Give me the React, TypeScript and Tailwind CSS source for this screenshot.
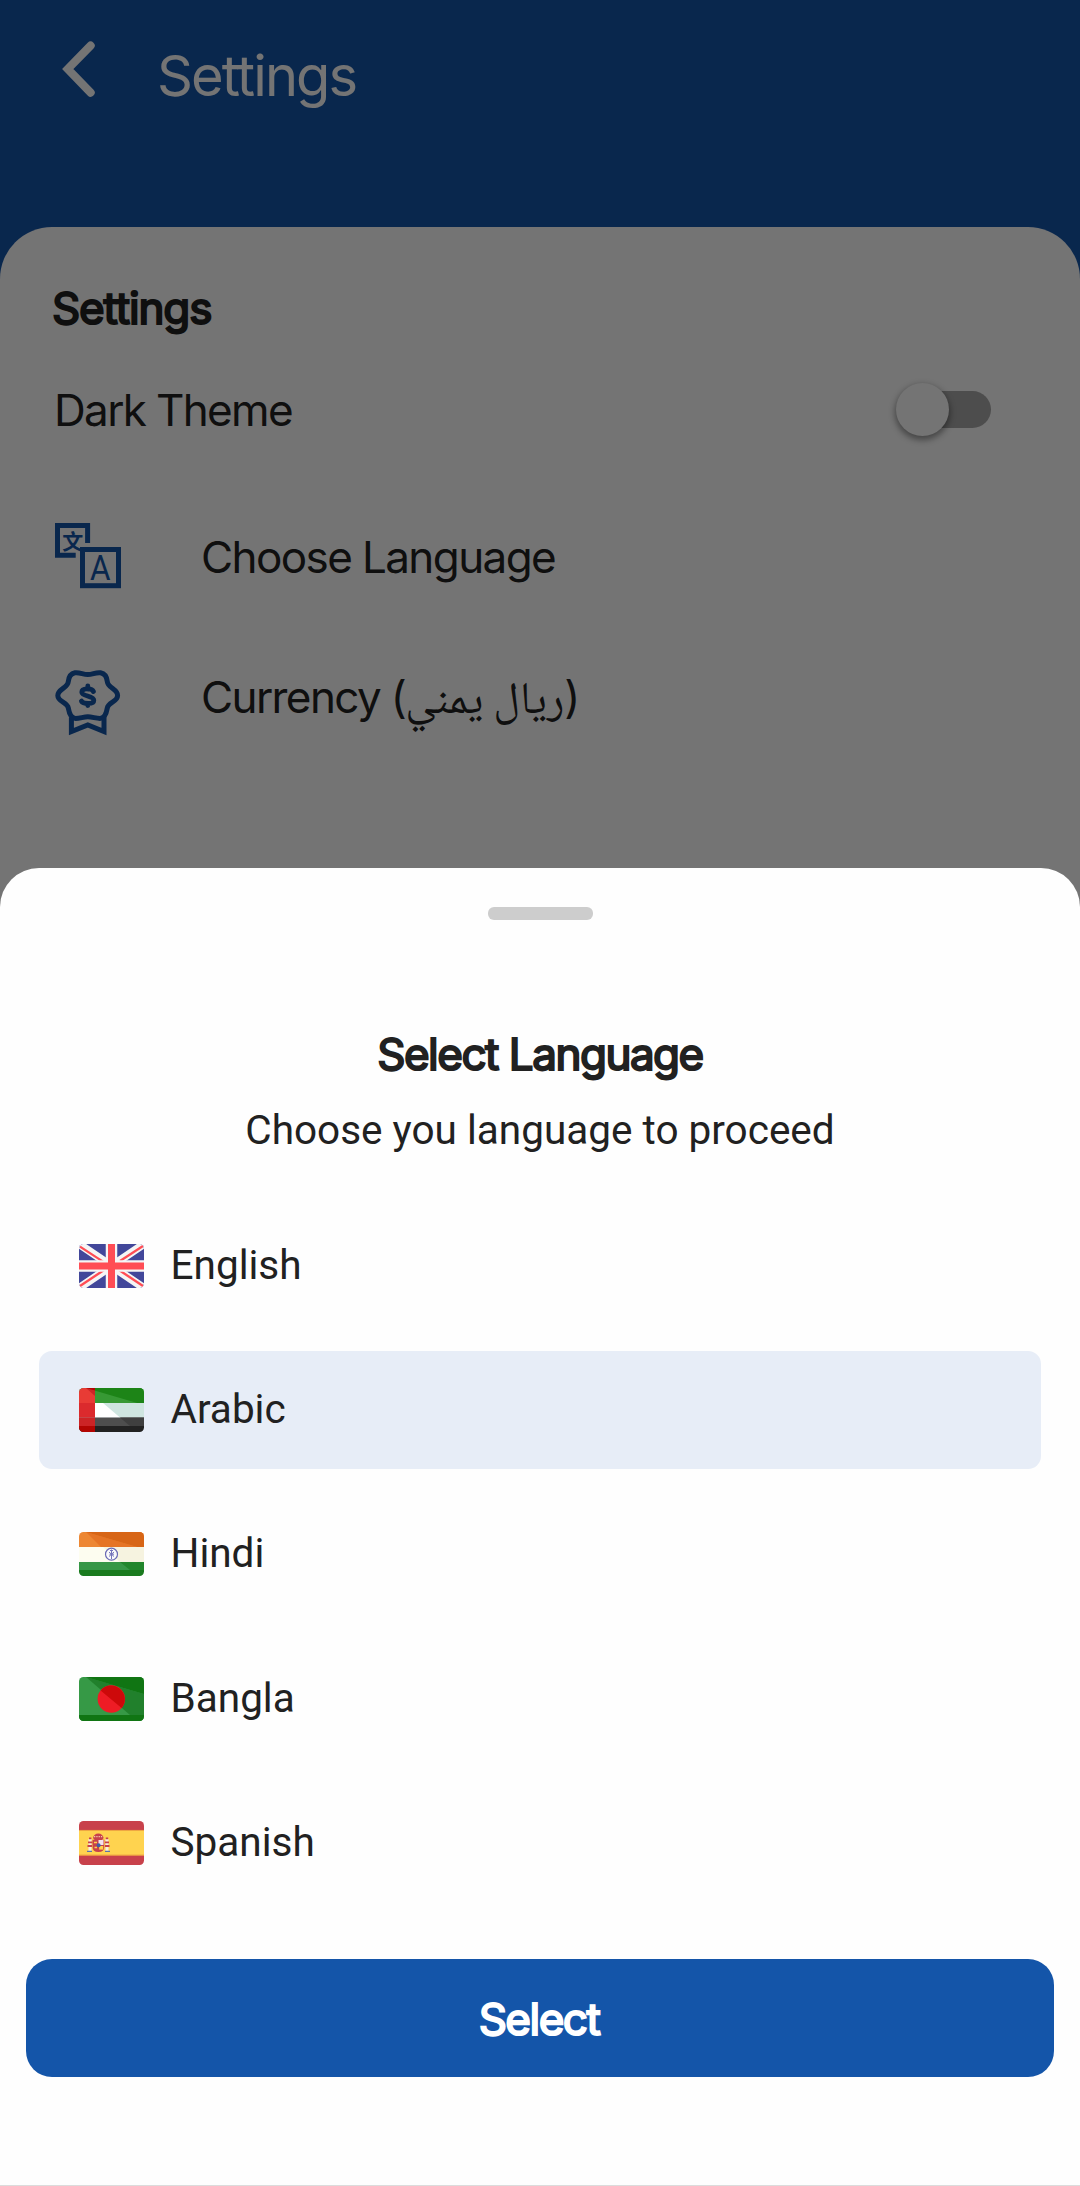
import type { ReactNode } from "react";

function Flag({ id, children }: { id: string; children: ReactNode }) {
  return (
    <svg viewBox="0 0 65 44" className="h-11 w-[65px] shrink-0">
      <clipPath id={id}>
        <rect width="65" height="44" rx="4.5" />
      </clipPath>
      <g clipPath={`url(#${id})`}>{children}</g>
    </svg>
  );
}

function UkFlag() {
  return (
    <Flag id="uk">
      <rect width="65" height="44" fill="#42479a" />
      <path d="M0 0 65 44M65 0 0 44" stroke="#f5f5f5" strokeWidth="8" />
      <path d="M1 2.6 24 17.6M41 17 64 2M1 42 25 26M40 26 64 42" stroke="#ff4d55" strokeWidth="2.3" />
      <path d="M32.5 0V44M0 22H65" stroke="#f5f5f5" strokeWidth="11.5" />
      <path d="M32.5 0V44M0 22H65" stroke="#ff4d55" strokeWidth="7" />
    </Flag>
  );
}

function UaeFlag() {
  return (
    <Flag id="uae">
      <rect width="65" height="15" fill="#379934" />
      <path d="M7 0H65V17Z" fill="#1d8417" />
      <rect y="15" width="65" height="14.5" fill="#fff" />
      <path d="M24 15H65V29.5H41Z" fill="#cfe5e0" />
      <rect y="29.5" width="65" height="8.5" fill="#4e4e4e" />
      <path d="M41 29.5H65V38H51Z" fill="#3f3f3f" />
      <rect y="38" width="65" height="6" fill="#222" />
      <rect width="16" height="15" fill="#e83b35" />
      <path d="M7 0H16V8Z" fill="#cd2426" />
      <path d="M7 0H16V2.6Z" fill="#b30502" />
      <rect y="15" width="16" height="14.5" fill="#db2a2d" />
      <rect y="29.5" width="16" height="8.5" fill="#cc2426" />
      <rect y="38" width="16" height="6" fill="#b30502" />
    </Flag>
  );
}

function IndiaFlag() {
  return (
    <Flag id="india">
      <rect width="65" height="15" fill="#ed8733" />
      <path d="M7 0 65 17H24Z" fill="#e57425" />
      <path d="M7 0H65V17Z" fill="#d76516" />
      <rect y="15" width="65" height="15" fill="#fdfdf0" />
      <path d="M24 15H65V30H41Z" fill="#f6f3e0" />
      <rect y="30" width="65" height="8" fill="#369746" />
      <path d="M41 30H65V38H51Z" fill="#22862c" />
      <rect y="38" width="65" height="6" fill="#197a1e" />
      <circle cx="32.5" cy="22.2" r="6" fill="#fafafa" stroke="#6b6bb5" strokeWidth="1.2" />
      <path d="M32.5 17.5V27M30 20 35 24.5M35 20 30 24.5M31 18.5H34M30.5 22.2H35" stroke="#7474ba" strokeWidth="1" />
    </Flag>
  );
}

function BangladeshFlag() {
  return (
    <Flag id="bangladesh">
      <rect width="65" height="44" fill="#369946" />
      <path d="M7 0 65 17V38H51Z" fill="#21802c" />
      <path d="M7 0H65V17Z" fill="#107513" />
      <rect y="38" width="65" height="6" fill="#107513" />
      <circle cx="32.3" cy="22" r="13.7" fill="#ee1c25" />
      <path d="M21.6 13.4A13.7 13.7 0 0 1 42.6 31Z" fill="#cd090a" />
    </Flag>
  );
}

function SpainFlag() {
  return (
    <Flag id="spain">
      <rect width="65" height="44" fill="#c8414b" />
      <rect y="9" width="65" height="25.5" fill="#ffd34f" />
      <path d="M0 9.4H65M0 34.1H65" stroke="#e8963f" strokeWidth="0.8" />
      <rect x="9.5" y="18" width="3" height="12" fill="#f6eee0" />
      <rect x="26.5" y="18" width="3" height="12" fill="#f6eee0" />
      <path d="M9 21.3H13.5M8.5 25H13M26 21.3H30M26 25H30.5M10 17.4H12.4M26.8 17.4H29.2" stroke="#c8414b" strokeWidth="1.8" />
      <path d="M8 30.3H13M26 30.3H31" stroke="#5d74a8" strokeWidth="1.2" />
      <path d="M14 17Q15 12.5 19.3 12.5T24.6 17L23 19H15.6Z" fill="#c8414b" />
      <path d="M15 15.6H24" stroke="#f3c9a5" strokeWidth="1.3" strokeDasharray="1.3 1" />
      <path d="M13.5 18.7H25.3V26Q25.3 31 19.4 31T13.5 26Z" fill="#c8414b" />
      <rect x="19.5" y="19" width="5" height="5" fill="#f4e3ee" />
      <path d="M15 21.5H18M15.5 26.5H18" stroke="#ffd34f" strokeWidth="1.3" />
      <rect x="20.2" y="25" width="4" height="3.6" fill="#ffd34f" />
      <circle cx="19.6" cy="24.2" r="2" fill="#3f5fa5" />
    </Flag>
  );
}

function TranslateIcon() {
  return (
    <svg viewBox="0 0 66 66" className="size-[66px] shrink-0" fill="none" stroke="#1455a9" strokeWidth="5">
      <path d="M20.7 32.3H2.5V2.5H32.6V20" />
      <rect x="27.5" y="26.5" width="36" height="36.2" />
      <text x="7.2" y="26" fontSize="21" fontWeight="700" stroke="none" fill="#1455a9" fontFamily="'Noto Sans CJK SC', sans-serif">
        文
      </text>
      <text x="35" y="57" fontSize="35" textLength="20.5" lengthAdjust="spacingAndGlyphs" stroke="none" fill="#1455a9" fontFamily="Roboto, sans-serif">
        A
      </text>
    </svg>
  );
}

function AwardIcon() {
  return (
    <svg viewBox="0 0 66 66" className="size-[66px] shrink-0" fill="none" stroke="#1455a9" strokeWidth="5">
      <path d="M20 2.8C25 2.2 28 4.6 32.8 4.6S40.5 2.2 45.5 2.8C50 3.6 52 8 52.4 12C53 18 62.6 19 62.6 25.5S53.3 32 52.3 38C51.3 44 49 48.4 45 48.4S37 46.8 32.8 46.8S25 48.4 20.6 48.4S14.3 44 13.3 38C12.3 32 2.8 32 2.8 25.5S12.7 18 13.2 12C13.6 8 15.5 3.6 20 2.8Z" />
      <path d="M16.4 47.5V61.5L32.8 55L49 61.5V47.5" />
      <path d="M38.4 21.5C37 18 26.8 18 26.8 22.2S38.8 25.6 38.8 30.2S28 34 26.4 31M32.8 16V19M32.8 34V35.5" strokeWidth="4.8" strokeLinecap="round" />
    </svg>
  );
}

const languages = [
  { name: "English", flag: <UkFlag /> },
  { name: "Arabic", flag: <UaeFlag />, selected: true },
  { name: "Hindi", flag: <IndiaFlag /> },
  { name: "Bangla", flag: <BangladeshFlag /> },
  { name: "Spanish", flag: <SpainFlag /> },
];

function SettingsScreen() {
  return (
    <div className="flex h-full flex-col bg-[#1455a9] font-[Inter,sans-serif] text-[#212121]">
      <header className="flex h-[227px] shrink-0 items-start pl-[62px] text-[#fcfcfc]">
        <svg viewBox="0 0 33 56" className="mt-[41px] h-14 w-[33px]" fill="none" stroke="currentColor" strokeWidth="8.2" strokeLinecap="round">
          <path d="M28.6 4.6 5.8 28 28.6 51.6" />
        </svg>
        <h1 className="mt-[46px] ml-[62px] text-[56px] leading-[60px] tracking-[-1.9px]">Settings</h1>
      </header>
      <main className="flex-1 rounded-t-[52px] bg-[#fcfcfc] pt-[51px] text-[44px] leading-[60px]">
        <h2 className="pl-[52px] tracking-[-1.15px] [-webkit-text-stroke:2px]">Settings</h2>
        <div className="mt-[41px] flex items-center justify-between pr-[89px] pl-[54px]">
          <span className="mt-px tracking-[-1.65px]">Dark Theme</span>
          <span className="flex h-[37.5px] w-[93px] items-center rounded-full bg-[#a8a8a8]">
            <span className="-ml-[2px] size-[53px] shrink-0 rounded-full bg-[#fcfcfc] shadow-[0_3px_6px_1px_rgba(0,0,0,0.4)]" />
          </span>
        </div>
        <div className="mt-[83px] flex items-start gap-20 pl-[55px]">
          <TranslateIcon />
          <span className="mt-1 tracking-[-1.6px]">Choose Language</span>
        </div>
        <div className="mt-[81px] flex h-[66px] items-start gap-20 pl-[55px]">
          <AwardIcon />
          <span className="-mt-[3px] tracking-[-1.6px]">
            Currency (<span className="text-[45px] tracking-normal [font-family:'Noto_Naskh_Arabic','DejaVu_Sans',sans-serif]">ريال يمني</span>)
          </span>
        </div>
      </main>
    </div>
  );
}

function LanguageSheet() {
  return (
    <section className="absolute inset-x-0 top-[868px] bottom-0 flex flex-col rounded-t-[39px] border-b border-[#dcdcdc] bg-[#fefefe] text-[#212121]">
      <div className="mt-[39px] h-[13px] w-[105px] shrink-0 self-center rounded-md bg-[#cdcdcd]" />
      <h2 className="mt-[104px] text-center font-[Inter,sans-serif] text-[44px] leading-[60px] tracking-[-1.5px] [-webkit-text-stroke:2px]">
        Select Language
      </h2>
      <p className="mt-[21px] text-center font-[Roboto,sans-serif] text-[40.5px] leading-[50px]">Choose you language to proceed</p>
      <ul className="mt-[51.8px] flex flex-col gap-[26.5px] px-[39px]">
        {languages.map((l) => (
          <li
            key={l.name}
            className={`flex h-[117.8px] items-center gap-[26.5px] rounded-[13px] pl-10 font-[Roboto,sans-serif] text-[40.5px] leading-[50px] ${l.selected ? "bg-[#e7edf7]" : ""}`}
          >
            {l.flag}
            <span className="-mt-0.5">{l.name}</span>
          </li>
        ))}
      </ul>
      <button className="mx-[26px] mt-[57.2px] h-[118.5px] shrink-0 rounded-[26px] bg-[#1455a9] pt-0.5 pr-0.5 font-[Inter,sans-serif] text-[44px] leading-[60px] tracking-[-1.5px] text-white [-webkit-text-stroke:2px]">
        Select
      </button>
    </section>
  );
}

export default function App() {
  return (
    <div className="relative h-[2186px] w-[1080px] overflow-hidden">
      <SettingsScreen />
      <div className="absolute inset-0 bg-black/54" />
      <LanguageSheet />
    </div>
  );
}
